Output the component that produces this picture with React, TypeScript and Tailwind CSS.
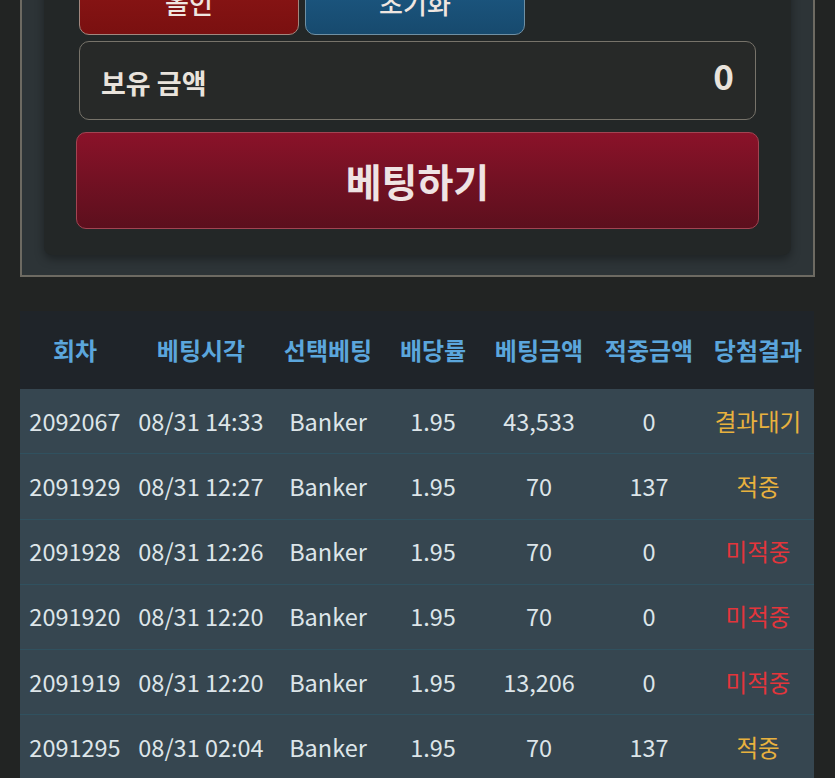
import React from 'react';

const columns = ['회차', '베팅시각', '선택베팅', '배당률', '베팅금액', '적중금액', '당첨결과'];

const history = [
  { round: '2092067', time: '08/31 14:33', pick: 'Banker', odds: '1.95', bet: '43,533', win: '0', result: '결과대기' },
  { round: '2091929', time: '08/31 12:27', pick: 'Banker', odds: '1.95', bet: '70', win: '137', result: '적중' },
  { round: '2091928', time: '08/31 12:26', pick: 'Banker', odds: '1.95', bet: '70', win: '0', result: '미적중' },
  { round: '2091920', time: '08/31 12:20', pick: 'Banker', odds: '1.95', bet: '70', win: '0', result: '미적중' },
  { round: '2091919', time: '08/31 12:20', pick: 'Banker', odds: '1.95', bet: '13,206', win: '0', result: '미적중' },
  { round: '2091295', time: '08/31 02:04', pick: 'Banker', odds: '1.95', bet: '70', win: '137', result: '적중' },
];

const gridCols = 'grid grid-cols-[110px_142px_112px_98px_114px_106px_112px]';

export default function App() {
  return (
    <div
      className="h-[778px] overflow-hidden bg-[#222423]"
      style={{ fontFamily: '"Noto Sans CJK KR", "Noto Sans", sans-serif' }}
    >
      {/* Bet panel */}
      <div className="ml-[20px] -mt-[60px] w-[795px] border-x-2 border-b-2 border-[#6d6a62] bg-[#2d3437] px-[22px] pt-[10px] pb-[20px]">
        <div className="rounded-lg bg-[#232727] px-[32px] pt-[19px] pb-[26px] shadow-[0_4px_10px_rgba(0,0,0,0.35)]">
          <div className="mx-[3px] flex gap-[6px]">
            <button className="flex h-[66px] w-[220px] items-center justify-center rounded-[10px] border border-[#a2877e] bg-gradient-to-b from-[#8e1616] to-[#7a1010] text-[26px] font-medium text-[#efe6e0]">
              올인
            </button>
            <button className="flex h-[66px] w-[220px] items-center justify-center rounded-[10px] border border-[#6f90a4] bg-gradient-to-b from-[#1d5c88] to-[#174a6e] text-[26px] font-medium text-[#efe6e0]">
              초기화
            </button>
          </div>

          <div className="mx-[3px] mt-[6px] flex h-[79px] items-center justify-between rounded-[10px] border-[1.5px] border-[#77736a] bg-[#272928] pl-[21px] pr-[21px]">
            <span className="mt-[6px] text-[27px] font-bold text-[#e9e3dc]">보유 금액</span>
            <span className="-mt-[10px] text-[35px] font-bold text-[#e9e3dc]">0</span>
          </div>

          <button className="mt-[12px] flex h-[97px] w-full items-center justify-center rounded-[10px] border border-[#a24452] bg-gradient-to-b from-[#8a1229] to-[#5c0f1d] text-[39px] font-bold text-[#efe3e3]">
            베팅하기
          </button>
        </div>
      </div>

      {/* Bet history */}
      <div className="ml-[20px] mt-[34px] w-[794px]">
        <div className={`${gridCols} h-[78px] items-center bg-[#1f2429]`}>
          {columns.map((col) => (
            <div key={col} className="text-center text-[24px] font-bold text-[#5ba6dc]">
              {col}
            </div>
          ))}
        </div>
        {history.map((row) => (
          <div
            key={row.round}
            className={`${gridCols} h-[65.3px] items-center border-b border-[#30515f] bg-[#364650] text-[23.5px] text-[#dde5e9]`}
          >
            <div className="text-center">{row.round}</div>
            <div className="text-center">{row.time}</div>
            <div className="text-center">{row.pick}</div>
            <div className="text-center">{row.odds}</div>
            <div className="text-center">{row.bet}</div>
            <div className="text-center">{row.win}</div>
            <div
              className={`text-center ${row.result === '미적중' ? 'text-[#e3353b]' : 'text-[#e8b13e]'}`}
            >
              {row.result}
            </div>
          </div>
        ))}
      </div>
    </div>
  );
}
